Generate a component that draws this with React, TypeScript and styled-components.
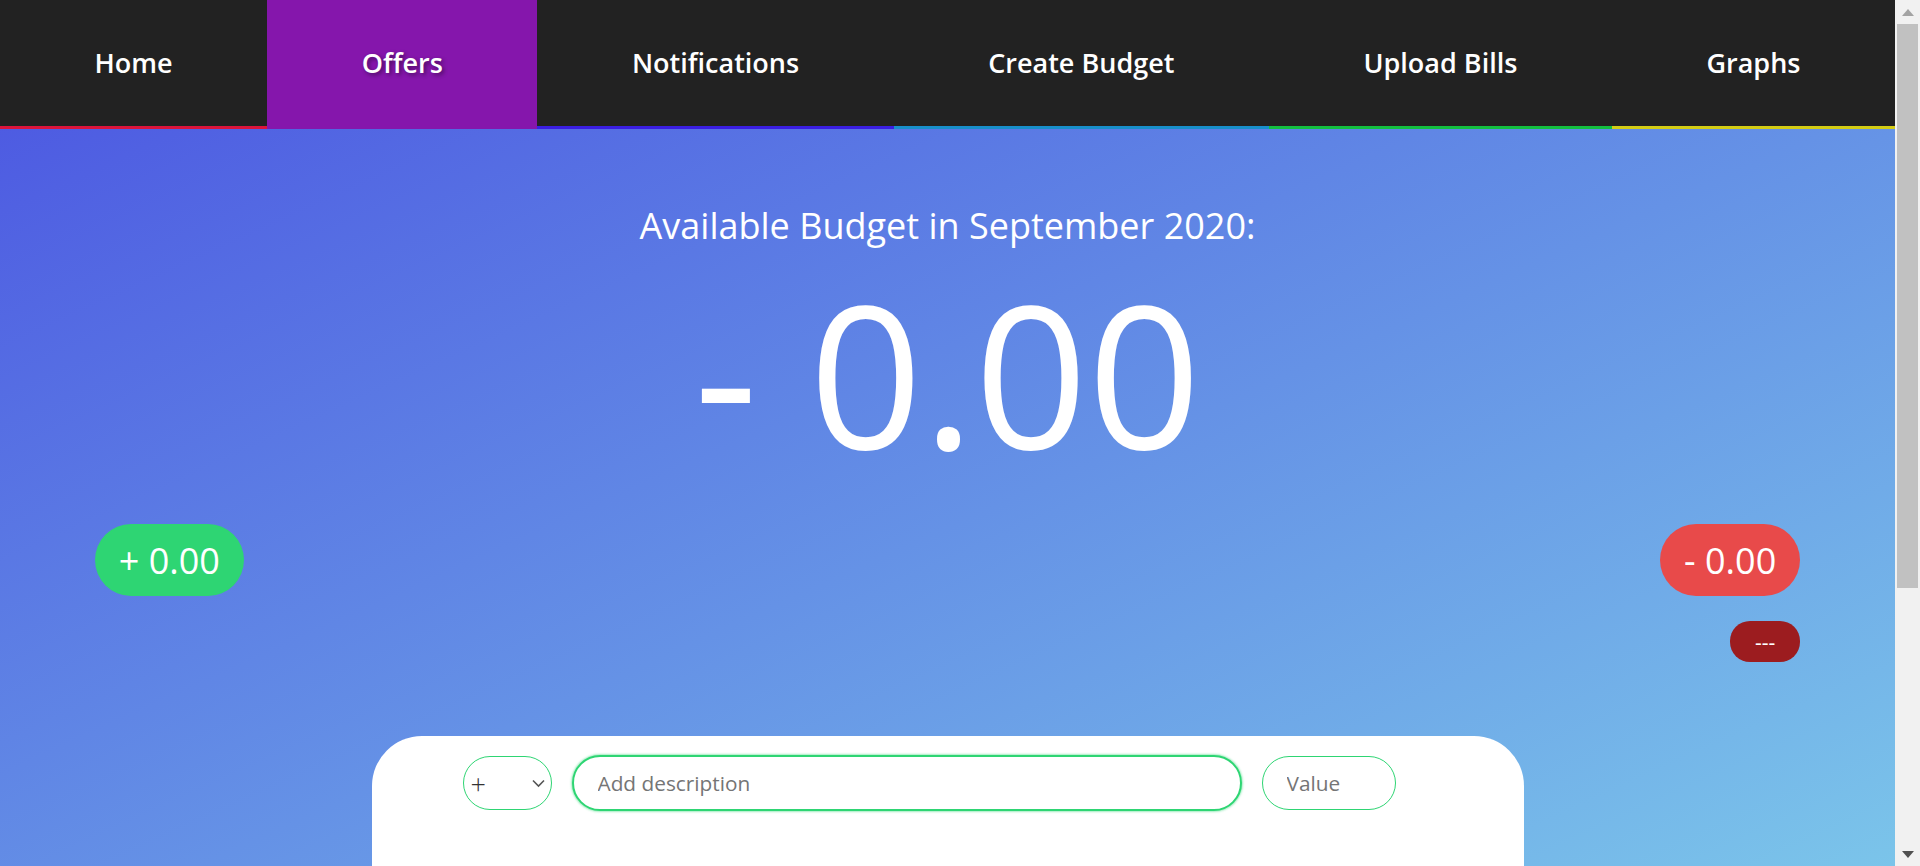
import React from "react";
import styled, { createGlobalStyle } from "styled-components";

const GlobalStyle = createGlobalStyle`
  html, body {
    margin: 0;
    padding: 0;
  }
  body {
    font-family: "Open Sans", "Noto Sans", sans-serif;
    background: #f1f1f1;
  }
  #root {
    margin-right: 25px;
  }
  *, *::before, *::after { box-sizing: border-box; }
`;

const Nav = styled.nav`
  display: flex;
  background: #222222;
`;

const NavItem = styled.a<{ $accent: string; $active?: boolean }>`
  flex: 1 1 auto;
  height: 129px;
  line-height: 126px;
  text-align: center;
  color: #ffffff;
  font-size: 27px;
  font-weight: 600;
  text-decoration: none;
  white-space: nowrap;
  background: ${(p) => (p.$active ? "#8516ac" : "#222222")};
  border-bottom: 3px solid ${(p) => p.$accent};
  text-shadow: ${(p) => (p.$active ? "2px 2px 4px rgba(0,0,0,0.45)" : "none")};
`;

const Main = styled.main`
  background: linear-gradient(to bottom right, #4a53e1 0%, #7bc5ea 100%);
  background-attachment: fixed;
  padding-top: 72px;
`;

const Title = styled.h2`
  margin: 0;
  text-align: center;
  color: #ffffff;
  font-size: 36px;
  font-weight: 400;
  line-height: 49px;
`;

const BigNumber = styled.div`
  margin-top: 23px;
  text-align: center;
  color: #ffffff;
  font-size: 198px;
  font-weight: 400;
  line-height: 198px;
  white-space: pre;
`;

const SummaryRow = styled.section`
  display: flex;
  justify-content: space-between;
  align-items: flex-start;
  padding: 0 5%;
  margin-top: 53px;
`;

const Pill = styled.div<{ $bg: string }>`
  display: flex;
  align-items: center;
  justify-content: center;
  height: 72px;
  padding: 0 24px;
  border-radius: 36px;
  background: ${(p) => p.$bg};
  color: #ffffff;
  font-size: 36px;
  font-weight: 400;
  white-space: pre;
`;

const ExpenseColumn = styled.div`
  display: flex;
  flex-direction: column;
  align-items: flex-end;
  gap: 25px;
`;

const PercentPill = styled.div`
  display: flex;
  align-items: center;
  justify-content: center;
  height: 41px;
  padding: 0 25px;
  border-radius: 20px;
  background: #9c1c1f;
  color: #ffffff;
  font-size: 21px;
`;

const Card = styled.section`
  width: 1152px;
  height: 526px;
  margin: 74px auto 0;
  background: #ffffff;
  border-radius: 50px 50px 0 0;
  padding: 19px 0 0 91px;
`;

const FormRow = styled.form`
  display: flex;
  align-items: center;
  gap: 20px;
`;

const SelectWrap = styled.div`
  position: relative;
  width: 89px;
  height: 54px;
`;

const TypeSelect = styled.select`
  appearance: none;
  -webkit-appearance: none;
  width: 100%;
  height: 100%;
  border: 1px solid #2ed573;
  border-radius: 27px;
  background: #ffffff;
  padding: 0 0 0 7px;
  font-family: "Open Sans", sans-serif;
  font-size: 27px;
  font-weight: 300;
  color: #333333;
  outline: none;
`;

const Chevron = styled.svg`
  position: absolute;
  left: 69px;
  top: 23px;
  width: 13px;
  height: 9px;
  pointer-events: none;
`;

const TextInput = styled.input<{ $w: number; $focused?: boolean }>`
  width: ${(p) => p.$w}px;
  height: ${(p) => (p.$focused ? 56 : 54)}px;
  border: ${(p) => (p.$focused ? "2px" : "1px")} solid #2ed573;
  border-radius: 28px;
  padding: 0 0 0 24px;
  font-family: "Open Sans", sans-serif;
  font-size: 20.8px;
  color: #444444;
  background: #ffffff;
  outline: none;
  box-shadow: ${(p) => (p.$focused ? "0 0 2px 1px rgba(46,213,115,0.45)" : "none")};
  &::placeholder {
    color: #757575;
  }
`;

/* Classic window scrollbar drawn over the right edge of the page */
const ScrollTrack = styled.div`
  position: fixed;
  top: 0;
  right: 0;
  width: 25px;
  height: 100vh;
  background: #f1f1f1;
  display: flex;
  flex-direction: column;
  align-items: center;
`;

const ArrowBox = styled.div`
  height: 24px;
  width: 100%;
  display: flex;
  align-items: center;
  justify-content: center;
`;

const Thumb = styled.div`
  width: 21px;
  height: 564px;
  background: #c1c1c1;
`;

const Spacer = styled.div`
  flex: 1;
`;

const navItems = [
  { label: "Home", accent: "#dc143c" },
  { label: "Offers", accent: "#8516ac", active: true },
  { label: "Notifications", accent: "#3a1ee2" },
  { label: "Create Budget", accent: "#188fcb" },
  { label: "Upload Bills", accent: "#13bf40" },
  { label: "Graphs", accent: "#d3cc15" },
];

export default function App() {
  return (
    <>
      <GlobalStyle />
      <Nav>
        {navItems.map((n) => (
          <NavItem key={n.label} href="#" $accent={n.accent} $active={n.active}>
            {n.label}
          </NavItem>
        ))}
      </Nav>
      <Main>
        <Title>Available Budget in September 2020:</Title>
        <BigNumber>- 0.00</BigNumber>
        <SummaryRow>
          <Pill $bg="#2ed573">+ 0.00</Pill>
          <ExpenseColumn>
            <Pill $bg="#e84a4a">- 0.00</Pill>
            <PercentPill>---</PercentPill>
          </ExpenseColumn>
        </SummaryRow>
        <Card>
          <FormRow onSubmit={(e) => e.preventDefault()}>
            <SelectWrap>
              <TypeSelect defaultValue="inc">
                <option value="inc">+</option>
                <option value="exp">-</option>
              </TypeSelect>
              <Chevron viewBox="0 0 13 9">
                <polyline points="1,1.5 6.5,7 12,1.5" fill="none" stroke="#555" strokeWidth="1.6" />
              </Chevron>
            </SelectWrap>
            <TextInput $w={670} $focused autoFocus type="text" placeholder="Add description" />
            <TextInput $w={134} type="number" placeholder="Value" />
          </FormRow>
        </Card>
      </Main>
      <ScrollTrack aria-hidden="true">
        <ArrowBox>
          <svg width="12" height="7" viewBox="0 0 12 7">
            <polygon points="0,7 6,0 12,7" fill="#a3a3a3" />
          </svg>
        </ArrowBox>
        <Thumb />
        <Spacer />
        <ArrowBox>
          <svg width="12" height="7" viewBox="0 0 12 7">
            <polygon points="0,0 12,0 6,7" fill="#505050" />
          </svg>
        </ArrowBox>
      </ScrollTrack>
    </>
  );
}
